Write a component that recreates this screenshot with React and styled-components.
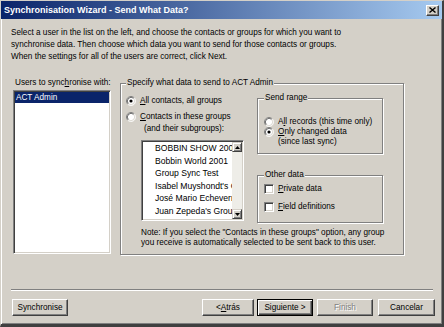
import React from 'react';
import styled, { createGlobalStyle } from 'styled-components';

const GlobalStyle = createGlobalStyle`
  html, body {
    margin: 0;
    padding: 0;
    background: #3a6ea5;
  }
  body {
    font-family: "Liberation Sans", Arial, sans-serif;
  }
  *, *::before, *::after {
    box-sizing: border-box;
  }
`;

const users = ['ACT Admin'];

const groups = [
  'BOBBIN SHOW 2001',
  'Bobbin World 2001',
  'Group Sync Test',
  "Isabel Muyshondt's Group",
  'José Mario Echeverría',
  "Juan Zepeda's Group",
  "Mauricio Infante's Group",
];

const RadioIcon = ({ checked }) => (
  <RadioSvg width="10" height="10" viewBox="0 0 12 12">
    <circle cx="6" cy="6" r="5" fill="#fff" />
    <path d="M2.11 9.89A5.5 5.5 0 0 1 9.89 2.11" stroke="#808080" fill="none" />
    <path d="M9.89 2.11A5.5 5.5 0 0 1 2.11 9.89" stroke="#fff" fill="none" />
    <path d="M2.82 9.18A4.5 4.5 0 0 1 9.18 2.82" stroke="#404040" fill="none" />
    <path d="M9.18 2.82A4.5 4.5 0 0 1 2.82 9.18" stroke="#d4d0c8" fill="none" />
    {checked && <circle cx="6" cy="6" r="1.9" fill="#000" />}
  </RadioSvg>
);

const Arrow = ({ down }) => (
  <svg width="5" height="3" viewBox="0 0 5 3">
    <path d={down ? 'M0 0H5L2.5 3Z' : 'M0 3H5L2.5 0Z'} fill="#000" />
  </svg>
);

export default function App() {
  return (
    <>
      <GlobalStyle />
      <Window>
        <TitleBar>
          <Title>Synchronisation Wizard - Send What Data?</Title>
          <CloseButton>
            <svg width="7" height="6" viewBox="0 0 7 6">
              <path d="M0.5 0.5L6.5 5.5M6.5 0.5L0.5 5.5" stroke="#000" strokeWidth="1.4" />
            </svg>
          </CloseButton>
        </TitleBar>

        <Intro>
          Select a user in the list on the left, and choose the contacts or groups for which you want to
          <br />
          synchronise data. Then choose which data you want to send for those contacts or groups.
          <br />
          When the settings for all of the users are correct, click Next.
        </Intro>

        <MainRow>
          <UsersColumn>
            <FieldLabel>
              Users to sync<u>h</u>ronise with:
            </FieldLabel>
            <UsersList>
              {users.map((u, i) => (
                <UserItem key={u} selected={i === 0}>
                  {u}
                </UserItem>
              ))}
            </UsersList>
          </UsersColumn>

          <MainGroup>
            <Legend>Specify what data to send to ACT Admin</Legend>
            <GroupColumns>
              <ContactsColumn>
                <RadioRow>
                  <RadioIcon checked />
                  <span>
                    <u>A</u>ll contacts, all groups
                  </span>
                </RadioRow>
                <RadioRow gap={4}>
                  <RadioIcon />
                  <span>
                    <u>C</u>ontacts in these groups
                    <SubLine>(and their subgroups):</SubLine>
                  </span>
                </RadioRow>
                <GroupList>
                  <GroupItems>
                    {groups.map((g) => (
                      <GroupItem key={g}>{g}</GroupItem>
                    ))}
                  </GroupItems>
                  <ScrollBar>
                    <ScrollButton>
                      <Arrow />
                    </ScrollButton>
                    <ScrollTrack />
                    <ScrollButton>
                      <Arrow down />
                    </ScrollButton>
                  </ScrollBar>
                </GroupList>
              </ContactsColumn>

              <OptionsColumn>
                <SubGroup height={62}>
                  <Legend>Send range</Legend>
                  <SmallRow top={13}>
                    <RadioIcon />
                    <span>
                      A<u>l</u>l records (this time only)
                    </span>
                  </SmallRow>
                  <SmallRow>
                    <RadioIcon checked />
                    <span>
                      <u>O</u>nly changed data
                      <br />
                      (since last sync)
                    </span>
                  </SmallRow>
                </SubGroup>
                <SubGroup height={54} spaced>
                  <Legend>Other data</Legend>
                  <SmallRow top={3}>
                    <CheckBox />
                    <span>
                      <u>P</u>rivate data
                    </span>
                  </SmallRow>
                  <SmallRow top={8}>
                    <CheckBox />
                    <span>
                      <u>F</u>ield definitions
                    </span>
                  </SmallRow>
                </SubGroup>
              </OptionsColumn>
            </GroupColumns>
            <Note>
              Note: If you select the "Contacts in these groups" option, any group
              <br />
              you receive is automatically selected to be sent back to this user.
            </Note>
          </MainGroup>
        </MainRow>

        <Separator />

        <ButtonRow>
          <Button width={56}>Synchronise</Button>
          <Spacer />
          <Button width={52}>
            &lt; <u>A</u>trás
          </Button>
          <Button width={56} isDefault gapLeft={3}>
            Siguiente &gt;
          </Button>
          <Button width={56} disabled gapLeft={4}>
            Finish
          </Button>
          <Button width={57} gapLeft={5}>
            Cancelar
          </Button>
        </ButtonRow>
      </Window>
    </>
  );
}

const Window = styled.div`
  width: 444px;
  height: 327px;
  display: flex;
  flex-direction: column;
  background: #d4d0c8;
  color: #000;
  font-size: 8.2px;
  border-style: solid;
  border-width: 1px 2px 3px 1px;
  border-color: #d4d0c8 #404040 #404040 #d4d0c8;
  box-shadow: inset 1px 1px #fff, inset -1px -1px #808080;
  overflow: hidden;
`;

const TitleBar = styled.div`
  height: 18px;
  display: flex;
  align-items: center;
  justify-content: space-between;
  padding: 0 3px 0 3px;
  background: linear-gradient(to right, #0a246a, #a6caf0);
`;

const Title = styled.div`
  color: #fff;
  font-weight: bold;
  font-size: 9px;
  white-space: nowrap;
`;

const CloseButton = styled.div`
  width: 13px;
  height: 11px;
  display: flex;
  align-items: center;
  justify-content: center;
  background: #d4d0c8;
  border: 1px solid;
  border-color: #fff #404040 #404040 #fff;
  box-shadow: inset -1px -1px #808080;
`;

const Intro = styled.div`
  margin: 8px 0 0 10px;
  line-height: 12px;
  white-space: nowrap;
`;

const MainRow = styled.div`
  display: flex;
  gap: 9px;
  margin-top: 14px;
  padding-left: 12px;
`;

const UsersColumn = styled.div`
  width: 98px;
  display: flex;
  flex-direction: column;
`;

const FieldLabel = styled.div`
  line-height: 12px;
  padding-left: 2px;
  white-space: nowrap;
`;

const Sunken = styled.div`
  background: #fff;
  border: 1px solid;
  border-color: #808080 #fff #fff #808080;
  box-shadow: inset 1px 1px #404040, inset -1px -1px #d4d0c8;
  padding: 1px;
`;

const UsersList = styled(Sunken)`
  margin-top: 1px;
  height: 164px;
`;

const UserItem = styled.div`
  height: 11px;
  line-height: 11px;
  padding-left: 1px;
  background: ${(p) => (p.selected ? '#0a246a' : 'transparent')};
  color: ${(p) => (p.selected ? '#fff' : '#000')};
`;

const Legend = styled.legend`
  padding: 0 1px;
  line-height: 12px;
  background: #d4d0c8;
  white-space: nowrap;
`;

const Etched = styled.fieldset`
  margin: 0;
  min-width: 0;
  border: 1px solid #808080;
  box-shadow: inset 1px 1px #fff, 1px 1px #fff;
`;

const MainGroup = styled(Etched)`
  width: 284px;
  height: 178px;
  padding: 2px 10px 0 5px;
`;

const GroupColumns = styled.div`
  display: flex;
  gap: 13px;
`;

const ContactsColumn = styled.div`
  width: 118px;
  padding-top: 4px;
  display: flex;
  flex-direction: column;
`;

const RadioRow = styled.div`
  display: flex;
  align-items: flex-start;
  gap: 4px;
  line-height: 12px;
  margin-top: ${(p) => p.gap || 0}px;
  white-space: nowrap;
`;

const RadioSvg = styled.svg`
  flex: none;
  margin-top: 1px;
`;

const SubLine = styled.span`
  display: block;
  padding-left: 4px;
`;

const GroupList = styled(Sunken)`
  margin: 5px 0 0 15px;
  width: 103px;
  height: 81px;
  display: flex;
  padding: 1px;
`;

const GroupItems = styled.div`
  flex: 1;
  overflow: hidden;
  padding: 0 0 0 12px;
`;

const GroupItem = styled.div`
  height: 12.5px;
  line-height: 12.5px;
  font-size: 8.6px;
  white-space: nowrap;
`;

const ScrollBar = styled.div`
  width: 10px;
  display: flex;
  flex-direction: column;
`;

const ScrollButton = styled.div`
  height: 10px;
  display: flex;
  align-items: center;
  justify-content: center;
  background: #d4d0c8;
  border: 1px solid;
  border-color: #d4d0c8 #404040 #404040 #d4d0c8;
  box-shadow: inset 1px 1px #fff, inset -1px -1px #808080;
`;

const ScrollTrack = styled.div`
  flex: 1;
  background: #eeede8;
`;

const OptionsColumn = styled.div`
  width: 126px;
  padding-top: 1px;
  display: flex;
  flex-direction: column;
`;

const SubGroup = styled(Etched)`
  height: ${(p) => p.height}px;
  margin-top: ${(p) => (p.spaced ? 15 : 0)}px;
  padding: 0 4px 0 6px;
`;

const SmallRow = styled.div`
  display: flex;
  align-items: flex-start;
  gap: 4px;
  line-height: 10px;
  margin-top: ${(p) => p.top || 0}px;
  white-space: nowrap;

  & > svg {
    margin-top: 0;
  }
`;

const CheckBox = styled.div`
  flex: none;
  width: 10px;
  height: 10px;
  background: #fff;
  border: 1px solid;
  border-color: #808080 #fff #fff #808080;
  box-shadow: inset 1px 1px #404040, inset -1px -1px #d4d0c8;
`;

const Note = styled.div`
  margin: 5px 0 0 15px;
  line-height: 10px;
  white-space: nowrap;
`;

const Separator = styled.div`
  margin: 34px 9px 0 10px;
  height: 2px;
  border-top: 1px solid #808080;
  border-bottom: 1px solid #fff;
`;

const ButtonRow = styled.div`
  display: flex;
  margin-top: 8px;
  padding: 0 7px 0 11px;
`;

const Spacer = styled.div`
  flex: 1;
`;

const Button = styled.div`
  width: ${(p) => p.width}px;
  height: 17px;
  margin-left: ${(p) => p.gapLeft || 0}px;
  display: flex;
  align-items: center;
  justify-content: center;
  white-space: nowrap;
  background: #d4d0c8;
  border: 1px solid;
  border-color: ${(p) => (p.isDefault ? '#000' : '#fff #404040 #404040 #fff')};
  box-shadow: ${(p) =>
    p.isDefault
      ? 'inset 1px 1px #fff, inset -1px -1px #404040, inset -2px -2px #808080'
      : 'inset -1px -1px #808080'};
  color: ${(p) => (p.disabled ? '#808080' : '#000')};
  text-shadow: ${(p) => (p.disabled ? '1px 1px #fff' : 'none')};
`;
